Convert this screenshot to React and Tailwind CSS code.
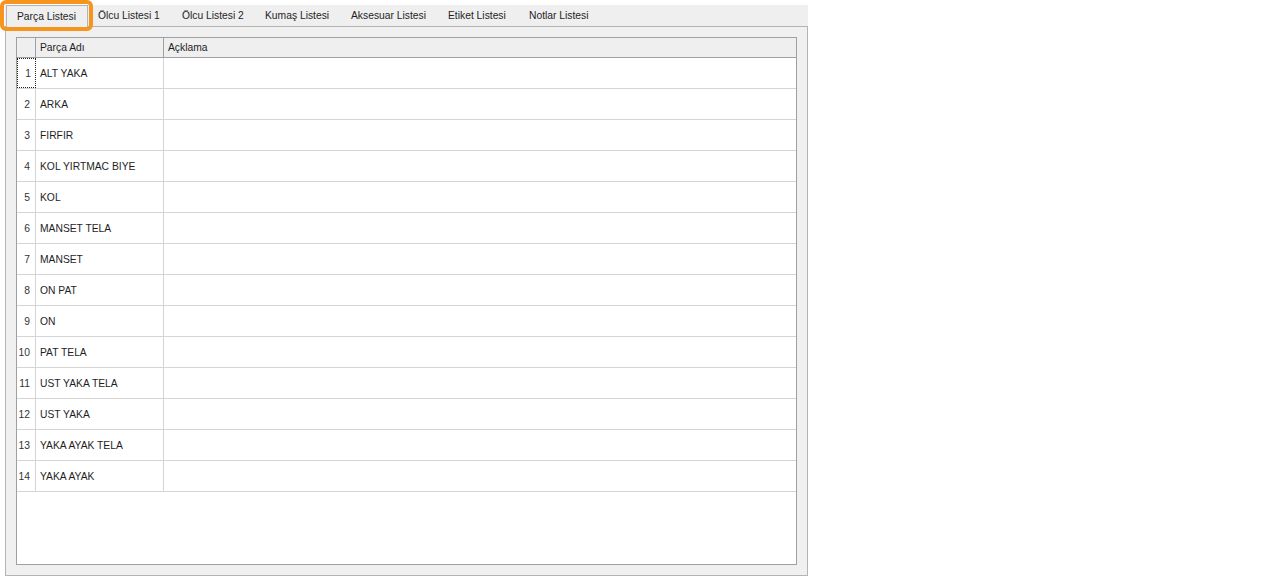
import React from 'react';

const tabs = [
  { label: 'Parça Listesi', w: 'w-[82px]' },
  { label: 'Ölcu Listesi 1', w: 'w-[84px]' },
  { label: 'Ölcu Listesi 2', w: 'w-[83px]' },
  { label: 'Kumaş Listesi', w: 'w-[86px]' },
  { label: 'Aksesuar Listesi', w: 'w-[97px]' },
  { label: 'Etiket Listesi', w: 'w-[81px]' },
  { label: 'Notlar Listesi', w: 'w-[90px]' },
];

const rows = [
  'ALT YAKA',
  'ARKA',
  'FIRFIR',
  'KOL YIRTMAC BIYE',
  'KOL',
  'MANSET TELA',
  'MANSET',
  'ON PAT',
  'ON',
  'PAT TELA',
  'UST YAKA TELA',
  'UST YAKA',
  'YAKA AYAK TELA',
  'YAKA AYAK',
];

export default function App() {
  return (
    <div
      className="relative w-[1270px] h-[576px] bg-white text-[10.3px] text-[#1e1e1e]"
      style={{ fontFamily: '"Liberation Sans", Arial, sans-serif' }}
    >
      <div className="pl-[5px] pt-[5px] w-[808px]">
        {/* tab strip */}
        <div className="flex h-[22px] bg-[#efefef] border-b border-[#b4b4b4]">
          {tabs.map((t, i) => (
            <div
              key={t.label}
              className={
                i === 0
                  ? `${t.w} ml-[1px] flex items-center pl-[10px] bg-[#efefef] border border-b-0 border-[#b4b4b4] h-[23px] -mb-px`
                  : `${t.w} flex items-center pl-[10px]`
              }
            >
              {t.label}
            </div>
          ))}
        </div>

        {/* panel */}
        <div className="h-[549px] bg-[#f0f0f0] border border-t-0 border-[#b4b4b4] p-[10px] flex flex-col">
          <div className="flex-1 bg-white border border-[#a0a0a0] flex flex-col">
            {/* header */}
            <div className="grid grid-cols-[19px_128px_1fr] h-[20px] bg-[#efefef] border-b border-[#a0a0a0]">
              <div className="border-r border-[#a0a0a0]" />
              <div className="border-r border-[#a0a0a0] flex items-center pl-[4px]">Parça Adı</div>
              <div className="flex items-center pl-[4px]">Açklama</div>
            </div>
            {rows.map((r, i) => (
              <div
                key={r}
                className="grid grid-cols-[19px_128px_1fr] h-[31px] border-b border-[#d4d4d4]"
              >
                <div
                  className={
                    i === 0
                      ? 'border border-dotted border-[#222] flex items-center justify-end pr-[4px] pt-[2px] text-[#333]'
                      : 'border-r border-[#d4d4d4] flex items-center justify-end pr-[5px] pt-[2px] text-[#333]'
                  }
                >
                  {i + 1}
                </div>
                <div className="border-r border-[#d4d4d4] flex items-center pl-[4px] pt-[2px]">{r}</div>
                <div />
              </div>
            ))}
          </div>
        </div>
      </div>

      {/* focus highlight around active tab */}
      <div className="absolute left-0 top-0 w-[93px] h-[31px] border-[4px] border-[#f7941d] rounded-[6px] pointer-events-none" />
    </div>
  );
}
